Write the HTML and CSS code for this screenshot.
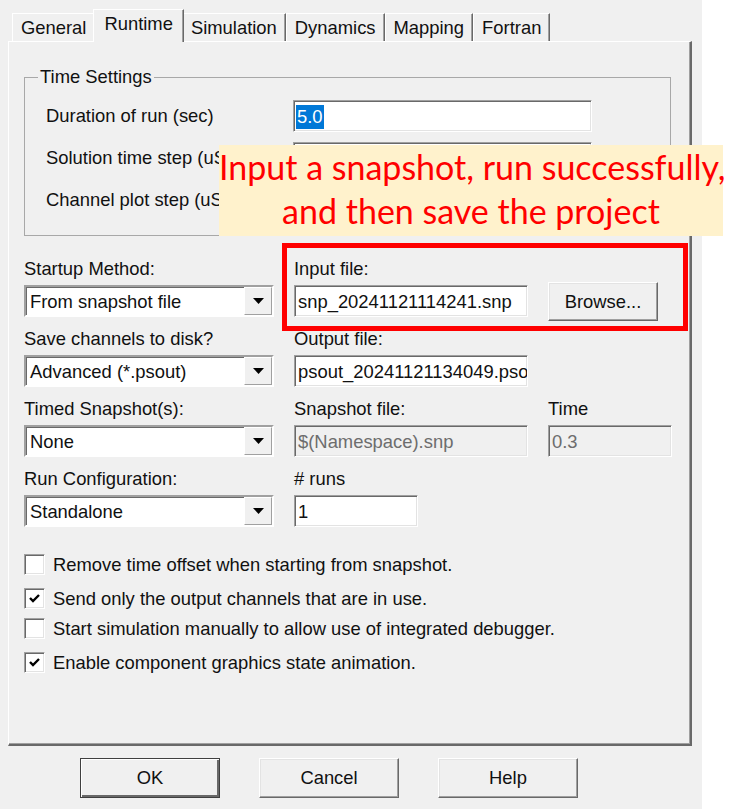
FILE: index.html
```html
<!DOCTYPE html>
<html>
<head>
<meta charset="utf-8">
<title>Runtime</title>
<link rel="stylesheet" href="styles.css">
</head>
<body>
<div class="stage">
  <div class="dialog">
    <div class="tabs">
      <div class="tab">General</div>
      <div class="tab active">Runtime</div>
      <div class="tab">Simulation</div>
      <div class="tab">Dynamics</div>
      <div class="tab">Mapping</div>
      <div class="tab">Fortran</div>
    </div>
    <div class="panel">
      <fieldset class="group">
        <legend>Time Settings</legend>
        <div class="trow"><span class="tlabel">Duration of run (sec)</span><div class="field wide"><span class="sel">5.0</span></div></div>
        <div class="trow"><span class="tlabel">Solution time step (uS)</span><div class="field wide">50.0</div></div>
        <div class="trow"><span class="tlabel">Channel plot step (uS)</span><div class="field wide">250.0</div></div>
      </fieldset>

      <div class="form">
        <div class="frow">
          <div class="cell"><div class="lbl">Startup Method:</div>
            <div class="combo"><span class="combo-text">From snapshot file</span><span class="combo-btn"><svg width="11" height="6" viewBox="0 0 11 6"><polygon points="0,0 11,0 5.5,6" fill="#000"/></svg></span></div></div>
          <div class="cell"><div class="lbl">Input file:</div><div class="field">snp_20241121114241.snp</div></div>
          <div class="cell end"><div class="btn browse">Browse...</div></div>
        </div>
        <div class="frow">
          <div class="cell"><div class="lbl">Save channels to disk?</div>
            <div class="combo"><span class="combo-text">Advanced (*.psout)</span><span class="combo-btn"><svg width="11" height="6" viewBox="0 0 11 6"><polygon points="0,0 11,0 5.5,6" fill="#000"/></svg></span></div></div>
          <div class="cell"><div class="lbl">Output file:</div><div class="field">psout_20241121134049.psout</div></div>
        </div>
        <div class="frow">
          <div class="cell"><div class="lbl">Timed Snapshot(s):</div>
            <div class="combo"><span class="combo-text">None</span><span class="combo-btn"><svg width="11" height="6" viewBox="0 0 11 6"><polygon points="0,0 11,0 5.5,6" fill="#000"/></svg></span></div></div>
          <div class="cell"><div class="lbl">Snapshot file:</div><div class="field disabled">$(Namespace).snp</div></div>
          <div class="cell"><div class="lbl">Time</div><div class="field disabled">0.3</div></div>
        </div>
        <div class="frow">
          <div class="cell"><div class="lbl">Run Configuration:</div>
            <div class="combo"><span class="combo-text">Standalone</span><span class="combo-btn"><svg width="11" height="6" viewBox="0 0 11 6"><polygon points="0,0 11,0 5.5,6" fill="#000"/></svg></span></div></div>
          <div class="cell"><div class="lbl"># runs</div><div class="field short">1</div></div>
        </div>
      </div>

      <div class="checks">
        <div class="check"><span class="box"></span><span>Remove time offset when starting from snapshot.</span></div>
        <div class="check"><span class="box"><svg width="17" height="17" viewBox="0 0 17 17"><polyline points="4,8 7,11 13,5" fill="none" stroke="#000" stroke-width="2.4"/></svg></span><span>Send only the output channels that are in use.</span></div>
        <div class="check tight"><span class="box"></span><span>Start simulation manually to allow use of integrated debugger.</span></div>
        <div class="check"><span class="box"><svg width="17" height="17" viewBox="0 0 17 17"><polyline points="4,8 7,11 13,5" fill="none" stroke="#000" stroke-width="2.4"/></svg></span><span>Enable component graphics state animation.</span></div>
      </div>
    </div>

    <div class="buttons">
      <div class="btn default">OK</div>
      <div class="btn">Cancel</div>
      <div class="btn">Help</div>
    </div>
  </div>

  <div class="callout">Input a snapshot, run successfully,<br>and then save the project</div>
  <div class="highlight"></div>
</div>
</body>
</html>
```
FILE: styles.css
```css
* { box-sizing: border-box; }

body {
  margin: 0;
  background: #fff;
  font-family: "Liberation Sans", Arial, sans-serif;
  font-size: 18.4px;
  color: #111;
}

.stage {
  position: relative;
  width: 752px;
  height: 809px;
}

.dialog {
  width: 702px;
  height: 809px;
  background: #f0f0f0;
}

/* tabs */
.tabs {
  display: flex;
  align-items: flex-end;
  height: 41px;
  padding-left: 12px;
}

.tab {
  height: 28px;
  line-height: 27px;
  padding: 0 8px;
  border-top: 1px solid #fff;
  border-left: 1px solid #fff;
  border-right: 1px solid #696969;
  box-shadow: inset -1px 0 0 #a0a0a0;
  white-space: nowrap;
}

.tab.active {
  position: relative;
  z-index: 2;
  height: 33px;
  line-height: 27px;
  margin: 0 -2px -1px;
  padding: 0 10px 0 10px;
  background: #f0f0f0;
}

/* panel */
.panel {
  margin-left: 8px;
  width: 684px;
  height: 705px;
  border-top: 1px solid #fff;
  border-left: 1px solid #fff;
  border-right: 2px solid #696969;
  border-bottom: 2px solid #696969;
  box-shadow: inset -1px -1px 0 #a0a0a0;
  padding: 25px 0 0 15px;
}

.group {
  width: 647px;
  margin: 0;
  padding: 13px 0 19px 21px;
  border: 1px solid #a8a8a8;
}

.group legend {
  padding: 0 2px;
  margin-left: -8px;
  line-height: 20px;
}

.trow {
  display: flex;
  align-items: center;
  height: 32px;
  margin-bottom: 10px;
}
.trow:last-child { margin-bottom: 0; }

.tlabel {
  width: 247px;
  white-space: nowrap;
}

.field {
  height: 32px;
  background: #fff;
  border: 1px solid;
  border-color: #a0a0a0 #fff #fff #a0a0a0;
  box-shadow: inset 1px 1px 0 #696969, inset -1px -1px 0 #e3e3e3;
  padding: 0 0 0 3px;
  line-height: 31px;
  white-space: nowrap;
  overflow: hidden;
}

.field.wide { width: 299px; padding-left: 2px; }
.field.short { width: 124px; }
.field.disabled { background: #f0f0f0; color: #6d6d6d; }

.sel {
  display: inline-block;
  background: #0078d7;
  color: #fff;
  line-height: 24px;
  padding: 0 1px;
}

/* form grid */
.form {
  margin-top: 23px;
  display: flex;
  flex-direction: column;
  gap: 12px;
}

.frow {
  display: grid;
  grid-template-columns: 250px 234px 124px;
  column-gap: 20px;
}

.cell {
  display: flex;
  flex-direction: column;
  gap: 6px;
}
.cell > .field { width: 100%; }
.cell > .field.short { width: 124px; }

.cell.end { justify-content: flex-end; }

.lbl {
  height: 20px;
  line-height: 20px;
  white-space: nowrap;
}

.combo {
  display: flex;
  height: 32px;
  background: #fff;
  border: 2px solid;
  border-color: #a0a0a0 #fff #fff #a0a0a0;
  box-shadow: inset 1px 1px 0 #696969;
}

.combo-text {
  flex: 1;
  padding-left: 4px;
  line-height: 29px;
  white-space: nowrap;
}

.combo-btn {
  width: 28px;
  display: flex;
  align-items: center;
  justify-content: center;
  background: #f0f0f0;
  border-top: 1px solid #fff;
  border-left: 1px solid #fff;
  border-right: 1px solid #a0a0a0;
  border-bottom: 1px solid #a0a0a0;
}

/* buttons */
.btn {
  display: flex;
  align-items: center;
  justify-content: center;
  width: 140px;
  height: 40px;
  background: #f0f0f0;
  border: 1px solid;
  border-color: #fff #696969 #696969 #fff;
  box-shadow: inset -1px -1px 0 #a0a0a0, inset 1px 1px 0 #e3e3e3;
}

.btn.browse {
  width: 110px;
  height: 39px;
  margin-bottom: -4px;
}

.btn.default {
  border: 1px solid #404040;
  box-shadow: inset 1px 1px 0 #fff, inset -2px -2px 0 #696969;
}

.buttons {
  display: flex;
  gap: 39px;
  padding-left: 80px;
  margin-top: 12px;
}

/* checkboxes */
.checks {
  margin-top: 27px;
  display: flex;
  flex-direction: column;
  gap: 13px;
}

.check {
  display: flex;
  align-items: center;
  gap: 8px;
  height: 21px;
  line-height: 24px;
  white-space: nowrap;
}
.check.tight { margin-top: -4px; }

.box {
  width: 21px;
  height: 21px;
  background: #fff;
  border: 1px solid;
  border-color: #a0a0a0 #fff #fff #a0a0a0;
  box-shadow: inset 1px 1px 0 #696969, inset -1px -1px 0 #e3e3e3;
  display: flex;
  align-items: center;
  justify-content: center;
}

/* annotations */
.callout {
  position: absolute;
  left: 219px;
  top: 145px;
  width: 504px;
  height: 91px;
  background: #fff2cc;
  color: #ff0000;
  font-family: Lato, "Open Sans", sans-serif;
  font-size: 34px;
  line-height: 44px;
  text-align: center;
  white-space: nowrap;
}

.highlight {
  position: absolute;
  left: 282px;
  top: 243px;
  width: 406px;
  height: 88px;
  border: 5px solid #ff0000;
}
```
